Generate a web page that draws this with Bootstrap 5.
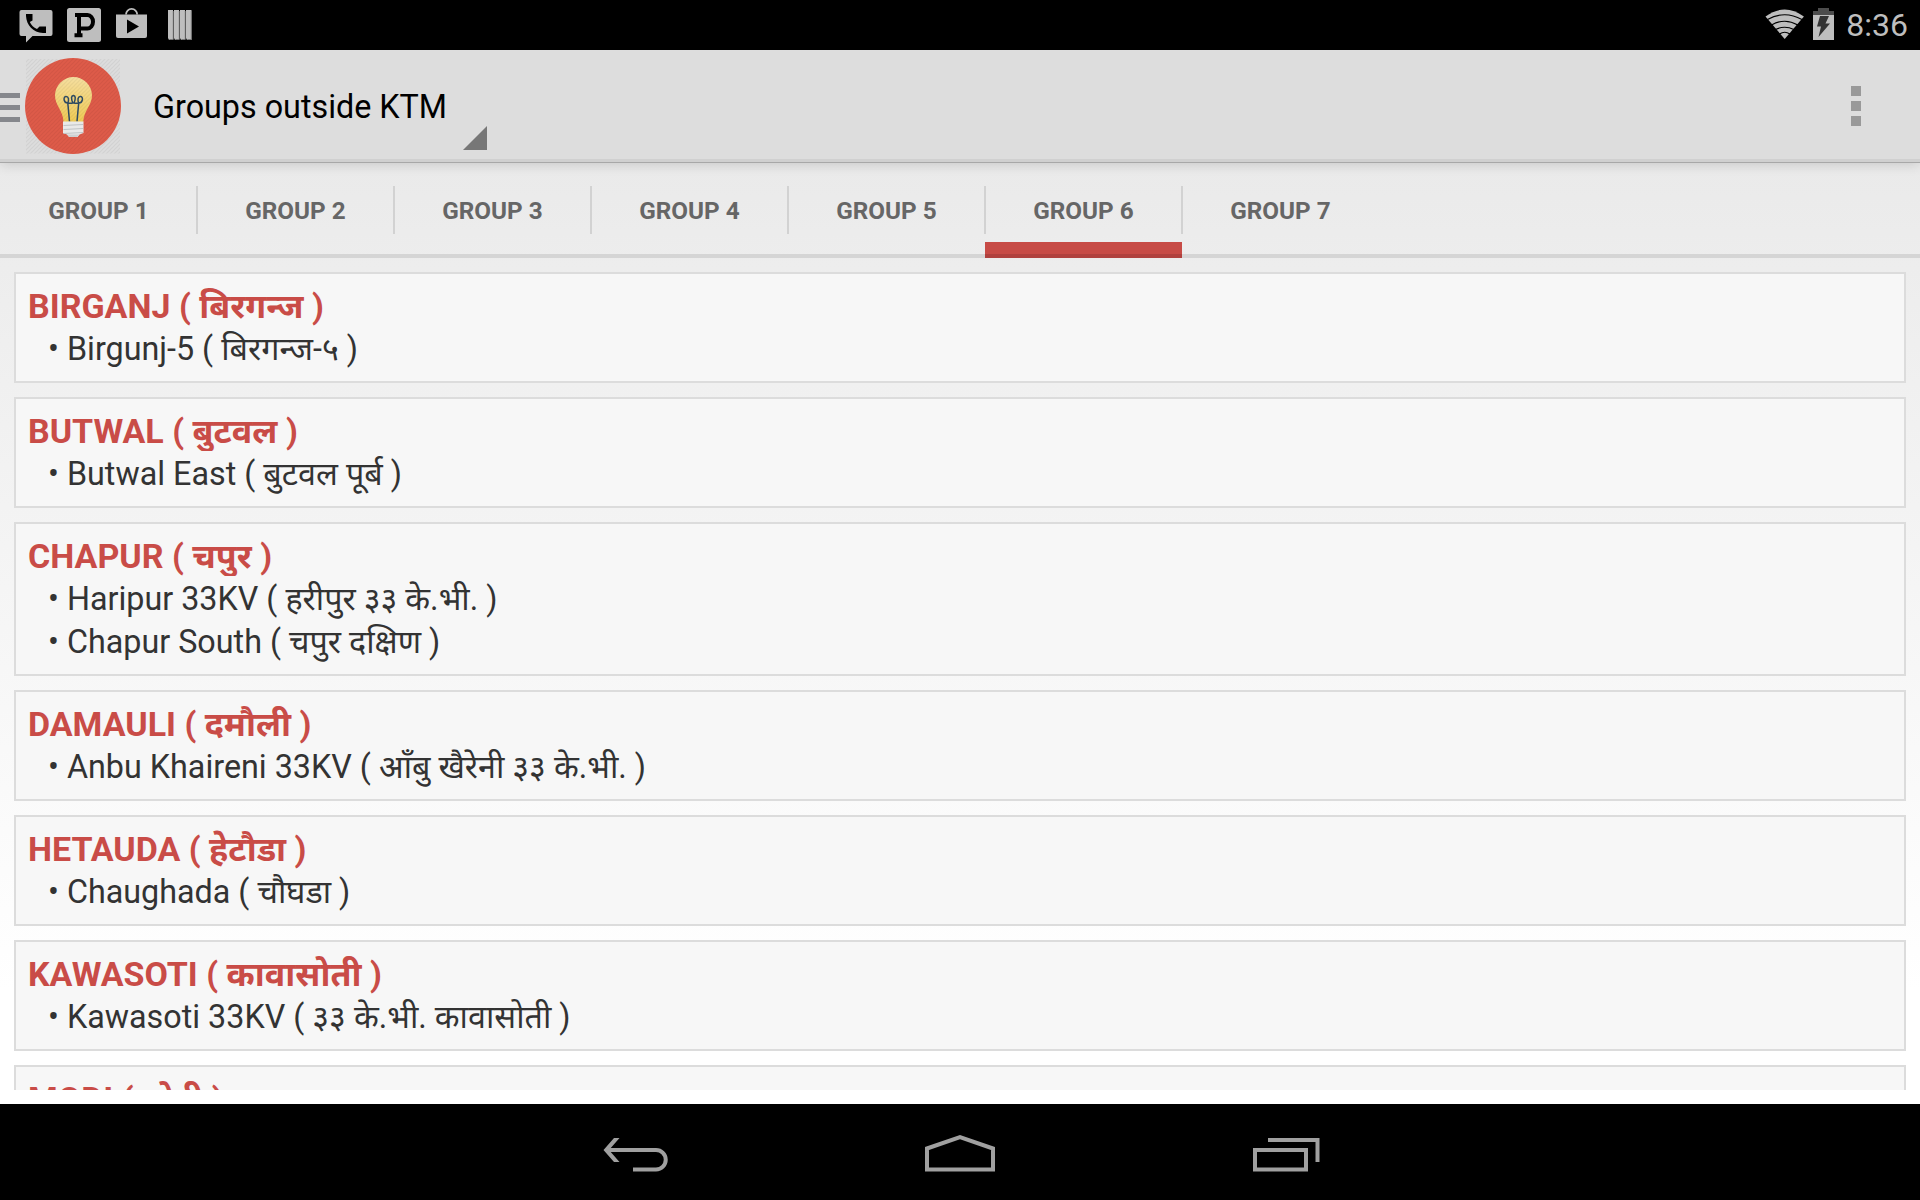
<!DOCTYPE html>
<html lang="en">
<head>
<meta charset="utf-8">
<meta name="viewport" content="width=device-width, initial-scale=1">
<title>Groups outside KTM</title>
<link rel="stylesheet" href="https://cdn.jsdelivr.net/npm/bootstrap@5.3.0/dist/css/bootstrap.min.css">
<style>
body{height:1200px;overflow:hidden;background:#fff;color:#333;font-family:Roboto,"Noto Sans Devanagari","Noto Sans",sans-serif;font-size:32.3px;line-height:43px}
svg{display:block;flex:none}
.status{height:50px;color:#bebebe;padding:0 12px 0 0}
.clock{font-size:32px;line-height:50px;margin-left:11px}
.appbar{height:112px;background:#ddd;border-bottom:3px solid #d0d0d0;box-shadow:0 1px 0 #a8a8a8,0 2px 12px rgba(0,0,0,.16);z-index:2}
.page-title{font-size:32.3px;line-height:40px;color:#000;margin:37px 0 0 28px;width:310px;white-space:nowrap}
.caret-corner{margin-top:76px}
.overflow-dots{margin:36px 59px 0 auto}
.screen{height:942px;background:linear-gradient(#eaeaea,#eee 15%,#fff 88%)}
.tabs{height:96px;border-bottom:4px solid #d5d5d5}
.tab-cell{width:197px;height:96px;font-size:24.3px;font-weight:700;color:#666;position:relative}
.tab-cell + .tab-cell::before{content:"";position:absolute;left:-1px;top:24px;width:2px;height:48px;background:#d2d2d2}
.tab-on{background:linear-gradient(#c74b46 12px,#b0413e 12px) bottom/100% 16px no-repeat}
.feeders{height:832px;padding:14px 14px 0;overflow:hidden}
.area{border:2px solid #dcdcdc;background:#f7f7f7;padding:10px 12px 0;margin-bottom:14px;height:111px;flex:none}
.area-2{height:154px}
.area h2{font-size:34px;font-weight:700;line-height:45px;height:42px;overflow:hidden;color:#c94c47;margin:0 0 2px}
.area li{padding-left:20px;white-space:pre}
.bottom{height:96px}
.bottom svg{fill:none;stroke:#a0a0a0;stroke-width:4}
</style>
</head>
<body>
<div class="status bg-black d-flex align-items-center justify-content-between">
<svg width="200" height="50" viewBox="0 0 200 50" fill="#bebebe">
<path d="M21.500 10h29a2 2 0 0 1 2 2v22a2 2 0 0 1-2 2H32.500l-6.500 6.500V36h-4.500a2 2 0 0 1-2-2V12a2 2 0 0 1 2-2z"/>
<path d="M26 14h6.500v6.500l-2.700 1.500c1.600 3.400 3.800 5.500 7.200 7l2.500-2.500H46V33h-3C33 32.500 26.500 25 26 16z" fill="#000"/>
<rect x="67" y="8" width="34" height="34" rx="2.500"/>
<path d="M75 15h12.500a5.500 6.700 0 0 1 0 13.400H79M79 15v20.500M74.500 35.300h8" fill="none" stroke="#000" stroke-width="4"/>
<path d="M116 14.500h31V36a2 2 0 0 1-2 2h-27a2 2 0 0 1-2-2z"/>
<path d="M126 14.500a5.600 5.600 0 0 1 11.200 0" fill="none" stroke="#bebebe" stroke-width="1.800"/>
<path d="M127 19.500v14l12-7z" fill="#000"/>
<g><path d="M168 10h5v30h-4l-1-2zM174 10h5v30h-4l-1-2zM180 10h5v30h-4l-1-2zM186 10h5.500v30H187l-1-2z"/><path d="M173.300 11v28.500h-4M179.300 11v28.500h-4M185.300 11v28.500h-4M191.300 11v28.500h-4" fill="none" stroke="#777"/></g>
</svg>
<div class="d-flex align-items-center">
<svg width="70" height="50" viewBox="1765 0 70 50">
<path d="M1784.700 39l-19.200-22.500q19.200-14 38.400 0z" fill="#bebebe"/>
<path d="M1767.500 19.500q17.200-9.500 34.400 0M1771.500 25q13.200-7.500 26.400 0M1775.500 29.500q9.200-4.500 18.400 0M1779.500 34q5.200-3.500 10.400 0" fill="none" stroke="#000" stroke-width="1.200"/>
<path d="M1813 11h5V8h11v3h5v4h-21z" fill="#4c4c4c"/><path d="M1813 15h21v25h-21z" fill="#bebebe"/>
<path d="M1820 16h9l-3.500 7.500h4.500L1818.500 37l2.500-10.500h-4z" fill="#333"/>
</svg>
<span class="clock">8:36</span>
</div>
</div>
<header class="appbar d-flex position-relative">
<svg width="125" height="109" viewBox="0 50 125 109">
<defs>
<pattern id="hatch" width="4" height="4" patternUnits="userSpaceOnUse"><path d="M-1 5L5-1M-1 1L1-1M3 5L5 3" stroke="#000" stroke-opacity=".05" stroke-width="1.200"/></pattern>
<linearGradient id="glass" x2="0" y2="1"><stop stop-color="#f6dfa0"/><stop offset="1" stop-color="#f0cb55"/></linearGradient>
</defs>
<path d="M0 93h20v5H0zM0 105h20v5H0zM0 117h20v5H0z" fill="#85878c"/>
<rect x="26" y="59" width="94" height="94.500" fill="url(#hatch)"/>
<circle cx="73" cy="106" r="48" fill="#de5b49"/>
<path d="M73.500 77a18.500 18.500 0 0 1 18.500 18.500c0 10-8.500 15-8.700 26.500H63.500C63.300 110.500 55 105.500 55 95.500A18.500 18.500 0 0 1 73.500 77z" fill="url(#glass)"/>
<circle cx="73" cy="106" r="47.500" fill="url(#hatch)"/>
<path d="M69.500 121.500L67.800 103c-4 .2-5-6-2-6.500 3-.3 3.300 3.500 2 6.500M77 121.500L78.700 103c4 .2 5-6 2-6.500-3-.3-3.300 3.500-2 6.500M67.800 103q3 .5 5 0-2.800-7 .6-7.400 3.400.4.600 7.400 2 .5 4.700 0" fill="none" stroke="#2d4a62" stroke-width="1.500"/>
<path d="M63 121.500h20.500v11.500l-4 1.500-2 2.500h-8.500l-2-2.500-4-1.500z" fill="#e9e9e9"/>
<path d="M63.500 125.500l19.500-1M63.500 129.500l19.500-1M63.500 133.500l19.500-1" stroke="#bfc3c5" stroke-width="1.200"/>
<path d="M67 134.500h12.500L77 137h-7.500z" fill="#cdd0d2"/>
</svg>
<span class="page-title">Groups outside KTM</span>
<svg class="caret-corner" width="25" height="25" viewBox="0 0 25 25"><path d="M24 0v24H0z" fill="#777"/></svg>
<svg class="overflow-dots" width="10" height="40" fill="#999"><path d="M0 0h10v10H0zM0 15h10v10H0zM0 30h10v10H0z"/></svg>
</header>
<main class="screen">
<nav class="tabs d-flex">
<div class="tab-cell d-flex justify-content-center align-items-center">GROUP 1</div>
<div class="tab-cell d-flex justify-content-center align-items-center">GROUP 2</div>
<div class="tab-cell d-flex justify-content-center align-items-center">GROUP 3</div>
<div class="tab-cell d-flex justify-content-center align-items-center">GROUP 4</div>
<div class="tab-cell d-flex justify-content-center align-items-center">GROUP 5</div>
<div class="tab-cell tab-on d-flex justify-content-center align-items-center">GROUP 6</div>
<div class="tab-cell d-flex justify-content-center align-items-center">GROUP 7</div>
</nav>
<div class="feeders d-flex flex-column">
<section class="area"><h2>BIRGANJ ( बिरगन्ज )</h2><ul class="list-unstyled m-0"><li>• Birgunj-5 ( बिरगन्ज-५ )</li></ul></section>
<section class="area"><h2>BUTWAL ( बुटवल )</h2><ul class="list-unstyled m-0"><li>• Butwal East ( बुटवल पूर्ब )</li></ul></section>
<section class="area area-2"><h2>CHAPUR ( चपुर )</h2><ul class="list-unstyled m-0"><li>• Haripur 33KV ( हरीपुर ३३ के.भी. )</li><li>• Chapur South ( चपुर दक्षिण )</li></ul></section>
<section class="area"><h2>DAMAULI ( दमौली )</h2><ul class="list-unstyled m-0"><li>• Anbu Khaireni 33KV ( आँबु खैरेनी ३३ के.भी. )</li></ul></section>
<section class="area"><h2>HETAUDA ( हेटौडा )</h2><ul class="list-unstyled m-0"><li>• Chaughada ( चौघडा )</li></ul></section>
<section class="area"><h2>KAWASOTI ( कावासोती )</h2><ul class="list-unstyled m-0"><li>• Kawasoti 33KV ( ३३ के.भी. कावासोती )</li></ul></section>
<section class="area"><h2>MODI ( मोदी )</h2></section>
</div>
</main>
<footer class="bottom bg-black d-flex justify-content-center">
<svg width="320" height="96" viewBox="480 1104 320 96"><path d="M606 1150h50a9.500 9.500 0 0 1 0 19.500h-23"/><path d="M603.500 1150l10.500-12h5.500l-10.500 12 10.500 12H614z" fill="#a0a0a0" stroke="none"/></svg>
<svg width="320" height="96" viewBox="800 1104 320 96"><path d="M927 1148.500l33-11.500 33 11.500v21h-66z"/></svg>
<svg width="320" height="96" viewBox="1120 1104 320 96"><path d="M1255 1150h51v19.500h-51zM1268 1140h49.500v22"/></svg>
</footer>
<script src="https://cdn.jsdelivr.net/npm/bootstrap@5.3.0/dist/js/bootstrap.bundle.min.js"></script>
</body>
</html>
